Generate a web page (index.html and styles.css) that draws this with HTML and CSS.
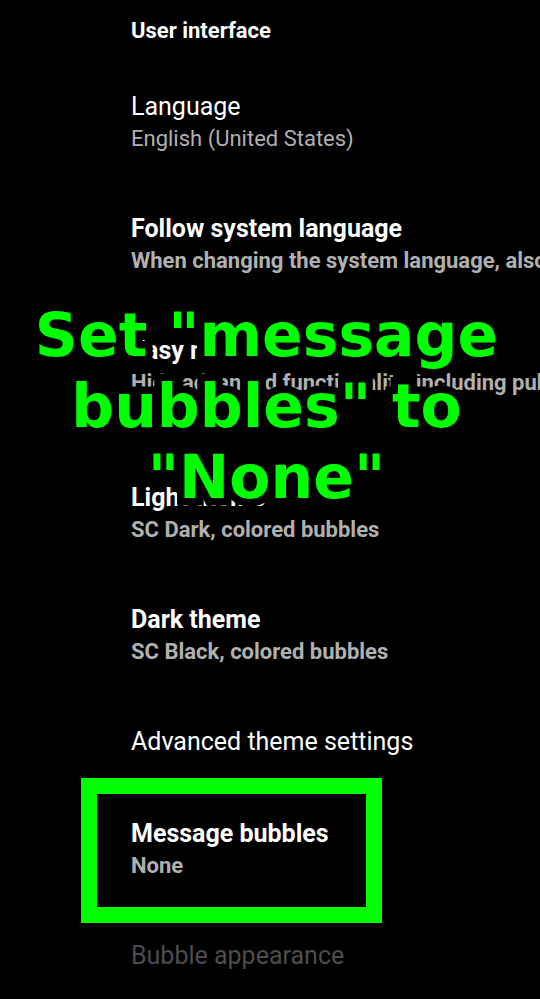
FILE: index.html
```html
<!DOCTYPE html>
<html lang="en">
<head>
<meta charset="utf-8">
<meta name="viewport" content="width=device-width, initial-scale=1">
<title>User interface</title>
<link rel="stylesheet" href="styles.css">
</head>
<body>
<main class="settings">
  <h1 class="section">User interface</h1>
  <ul class="list">
    <li><button class="item" type="button"><span class="title">Language</span><span class="summary">English (United States)</span></button></li>
    <li><button class="item strong" type="button"><span class="title">Follow system language</span><span class="summary">When changing the system language, also</span></button></li>
    <li><button class="item strong tall" type="button"><span class="title">Easy mode</span><span class="summary">Hide advanced functionality, including pub</span></button></li>
    <li><button class="item strong" type="button"><span class="title">Light theme</span><span class="summary">SC Dark, colored bubbles</span></button></li>
    <li><button class="item strong" type="button"><span class="title">Dark theme</span><span class="summary">SC Black, colored bubbles</span></button></li>
    <li><button class="item" type="button"><span class="title">Advanced theme settings</span></button></li>
    <li class="highlight"><button class="item strong" type="button"><span class="title">Message bubbles</span><span class="summary">None</span></button></li>
    <li><button class="item" type="button" disabled><span class="title">Bubble appearance</span></button></li>
  </ul>
  <p class="caption">Set "message bubbles" to "None"</p>
</main>
</body>
</html>
```
FILE: styles.css
```css
*,
*::after {
  box-sizing: border-box;
}

body {
  margin: 0;
  background: #000;
  color: #fff;
  font-family: Roboto, sans-serif;
}

.settings {
  position: relative;
  overflow: hidden;
}

.section {
  margin: 0;
  padding: 16px 0 15px 131px;
  font-size: 22px;
  line-height: 30px;
  font-weight: 700;
}

.list {
  margin: 0;
  padding: 0;
  list-style: none;
}

.item {
  display: block;
  width: 100%;
  padding: 31px 0 31px 131px;
  border: 0;
  background: none;
  color: inherit;
  font: inherit;
  text-align: left;
  white-space: nowrap;
  overflow: hidden;
}

.title,
.summary {
  display: block;
}

.title {
  font-size: 25px;
  line-height: 30px;
}

.summary {
  margin-top: 4px;
  padding-bottom: 1px;
  font-size: 22px;
  line-height: 25px;
  color: #b0b0b0;
}

.strong {
  font-weight: 700;
}

.tall {
  padding-bottom: 56px;
}

.item:disabled {
  color: #4d4d4d;
}

.highlight {
  position: relative;
}

.highlight::after {
  content: "";
  position: absolute;
  top: -10px;
  bottom: -13px;
  left: 81px;
  width: 301px;
  border: 16px solid #0f0;
  pointer-events: none;
}

.caption {
  position: absolute;
  top: 300px;
  left: 0;
  right: 7px;
  margin: 0;
  padding: 0 20px;
  color: #0f0;
  font: 700 60px/71px "DejaVu Sans", sans-serif;
  text-align: center;
  -webkit-text-stroke: 15px #000;
  paint-order: stroke fill;
  pointer-events: none;
}
```
